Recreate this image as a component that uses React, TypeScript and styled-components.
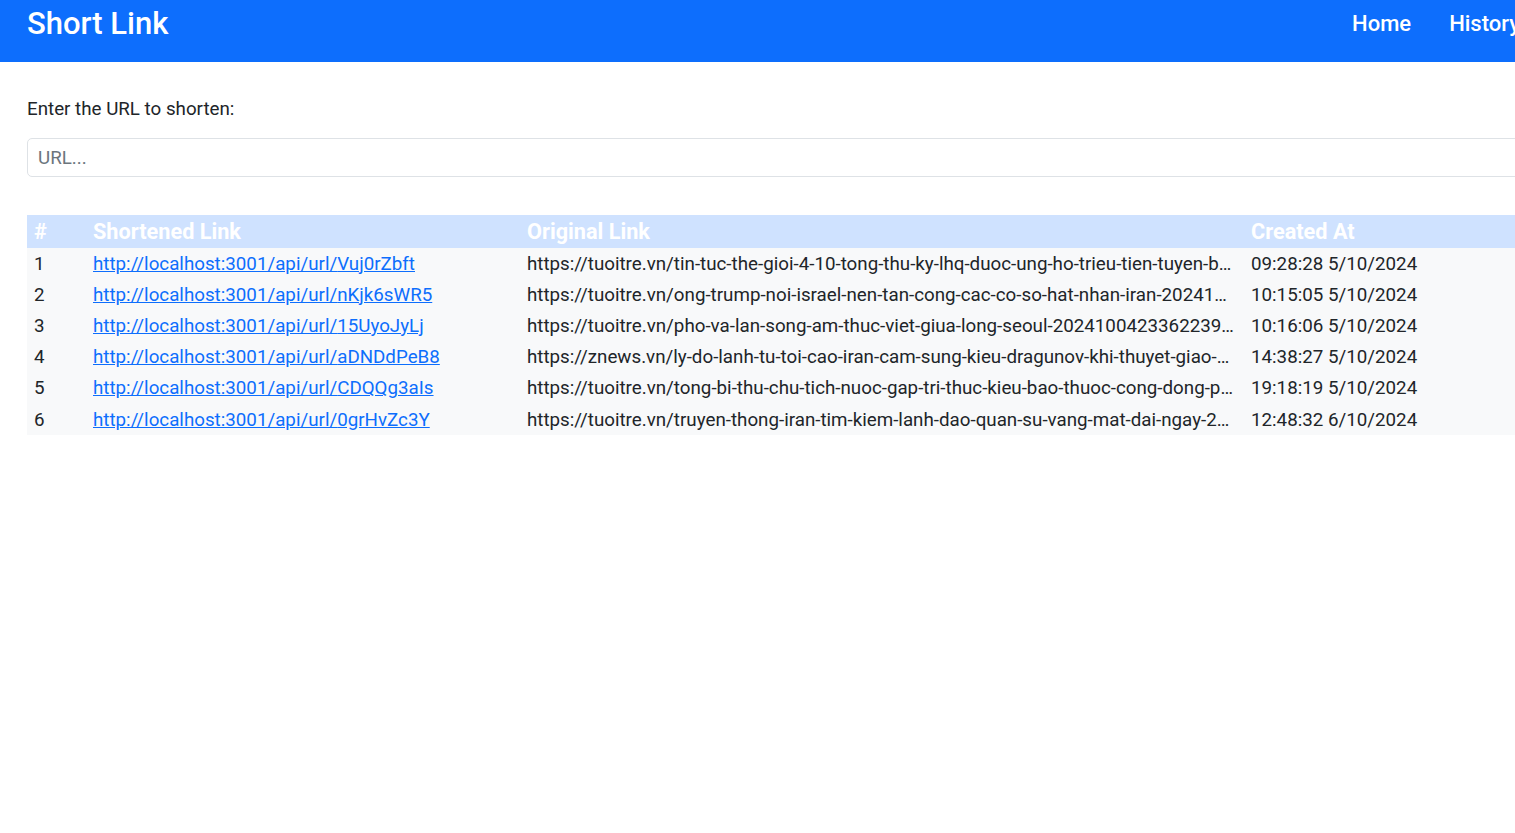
import React from 'react';
import styled, { createGlobalStyle } from 'styled-components';

const GlobalStyle = createGlobalStyle`
  html, body {
    margin: 0;
    padding: 0;
    overflow: hidden;
    background: #fff;
    font-family: Roboto, "Liberation Sans", sans-serif;
    color: #212529;
  }
`;

const Page = styled.div`
  width: 1547px;
`;

const Header = styled.header`
  height: 62px;
  background: #0d6efd;
  display: flex;
  align-items: flex-start;
  justify-content: space-between;
  padding: 0 27px;
  box-sizing: border-box;
`;

const Brand = styled.div`
  color: #fff;
  font-size: 31px;
  font-weight: 500;
  line-height: 48px;
`;

const Nav = styled.nav`
  display: flex;
  gap: 38px;
  padding-top: 7px;
`;

const NavLink = styled.a`
  color: #fff;
  font-size: 22px;
  font-weight: 500;
  line-height: 34px;
  text-decoration: none;
`;

const Main = styled.main`
  padding: 33px 0 0 27px;
`;

const Label = styled.label`
  display: block;
  font-size: 18.75px;
  line-height: 28px;
  margin-bottom: 15px;
`;

const UrlInput = styled.input`
  display: block;
  width: 100%;
  box-sizing: border-box;
  height: 39px;
  border: 1px solid #dee2e6;
  border-radius: 5px;
  padding: 0 10px;
  font-family: Roboto, "Liberation Sans", sans-serif;
  font-size: 18.75px;
  color: #212529;
  outline: none;

  &::placeholder {
    color: #6c757d;
  }
`;

const Table = styled.table`
  margin-top: 38px;
  width: 100%;
  border-collapse: collapse;
  table-layout: fixed;
`;

const HeadRow = styled.tr`
  background: #cfe2ff;
`;

const Th = styled.th<{ $w?: number }>`
  width: ${p => (p.$w ? `${p.$w}px` : 'auto')};
  text-align: left;
  color: #fff;
  font-size: 21.7px;
  font-weight: 700;
  height: 33px;
  padding: 0 7px;
`;

const BodyRow = styled.tr`
  background: #f8f9fa;
`;

const Td = styled.td<{ $clip?: boolean }>`
  font-size: 18.75px;
  height: 31.2px;
  padding: 0 7px;
  white-space: nowrap;
  overflow: ${p => (p.$clip ? 'hidden' : 'visible')};
  text-overflow: ${p => (p.$clip ? 'ellipsis' : 'clip')};
`;

const ShortLink = styled.a`
  color: #0d6efd;
  text-decoration: underline;
`;

const rows = [
  {
    code: 'Vuj0rZbft',
    url: 'https://tuoitre.vn/tin-tuc-the-gioi-4-10-tong-thu-ky-lhq-duoc-ung-ho-trieu-tien-tuyen-bo-202410050745.htm',
    at: '09:28:28 5/10/2024',
  },
  {
    code: 'nKjk6sWR5',
    url: 'https://tuoitre.vn/ong-trump-noi-israel-nen-tan-cong-cac-co-so-hat-nhan-iran-20241005082133.htm',
    at: '10:15:05 5/10/2024',
  },
  {
    code: '15UyoJyLj',
    url: 'https://tuoitre.vn/pho-va-lan-song-am-thuc-viet-giua-long-seoul-20241004233622393.htm',
    at: '10:16:06 5/10/2024',
  },
  {
    code: 'aDNDdPeB8',
    url: 'https://znews.vn/ly-do-lanh-tu-toi-cao-iran-cam-sung-kieu-dragunov-khi-thuyet-giao-post1500233.html',
    at: '14:38:27 5/10/2024',
  },
  {
    code: 'CDQQg3aIs',
    url: 'https://tuoitre.vn/tong-bi-thu-chu-tich-nuoc-gap-tri-thuc-kieu-bao-thuoc-cong-dong-phap-20241005.htm',
    at: '19:18:19 5/10/2024',
  },
  {
    code: '0grHvZc3Y',
    url: 'https://tuoitre.vn/truyen-thong-iran-tim-kiem-lanh-dao-quan-su-vang-mat-dai-ngay-20241006.htm',
    at: '12:48:32 6/10/2024',
  },
];

export default function App() {
  return (
    <Page>
      <GlobalStyle />
      <Header>
        <Brand>Short Link</Brand>
        <Nav>
          <NavLink href="#">Home</NavLink>
          <NavLink href="#">History</NavLink>
        </Nav>
      </Header>
      <Main>
        <Label htmlFor="url">Enter the URL to shorten:</Label>
        <UrlInput id="url" placeholder="URL..." />
        <Table>
          <thead>
            <HeadRow>
              <Th $w={45}>#</Th>
              <Th $w={420}>Shortened Link</Th>
              <Th $w={710}>Original Link</Th>
              <Th>Created At</Th>
            </HeadRow>
          </thead>
          <tbody>
            {rows.map((r, i) => (
              <BodyRow key={r.code}>
                <Td>{i + 1}</Td>
                <Td>
                  <ShortLink href="#">http://localhost:3001/api/url/{r.code}</ShortLink>
                </Td>
                <Td $clip>{r.url}</Td>
                <Td>{r.at}</Td>
              </BodyRow>
            ))}
          </tbody>
        </Table>
      </Main>
    </Page>
  );
}
